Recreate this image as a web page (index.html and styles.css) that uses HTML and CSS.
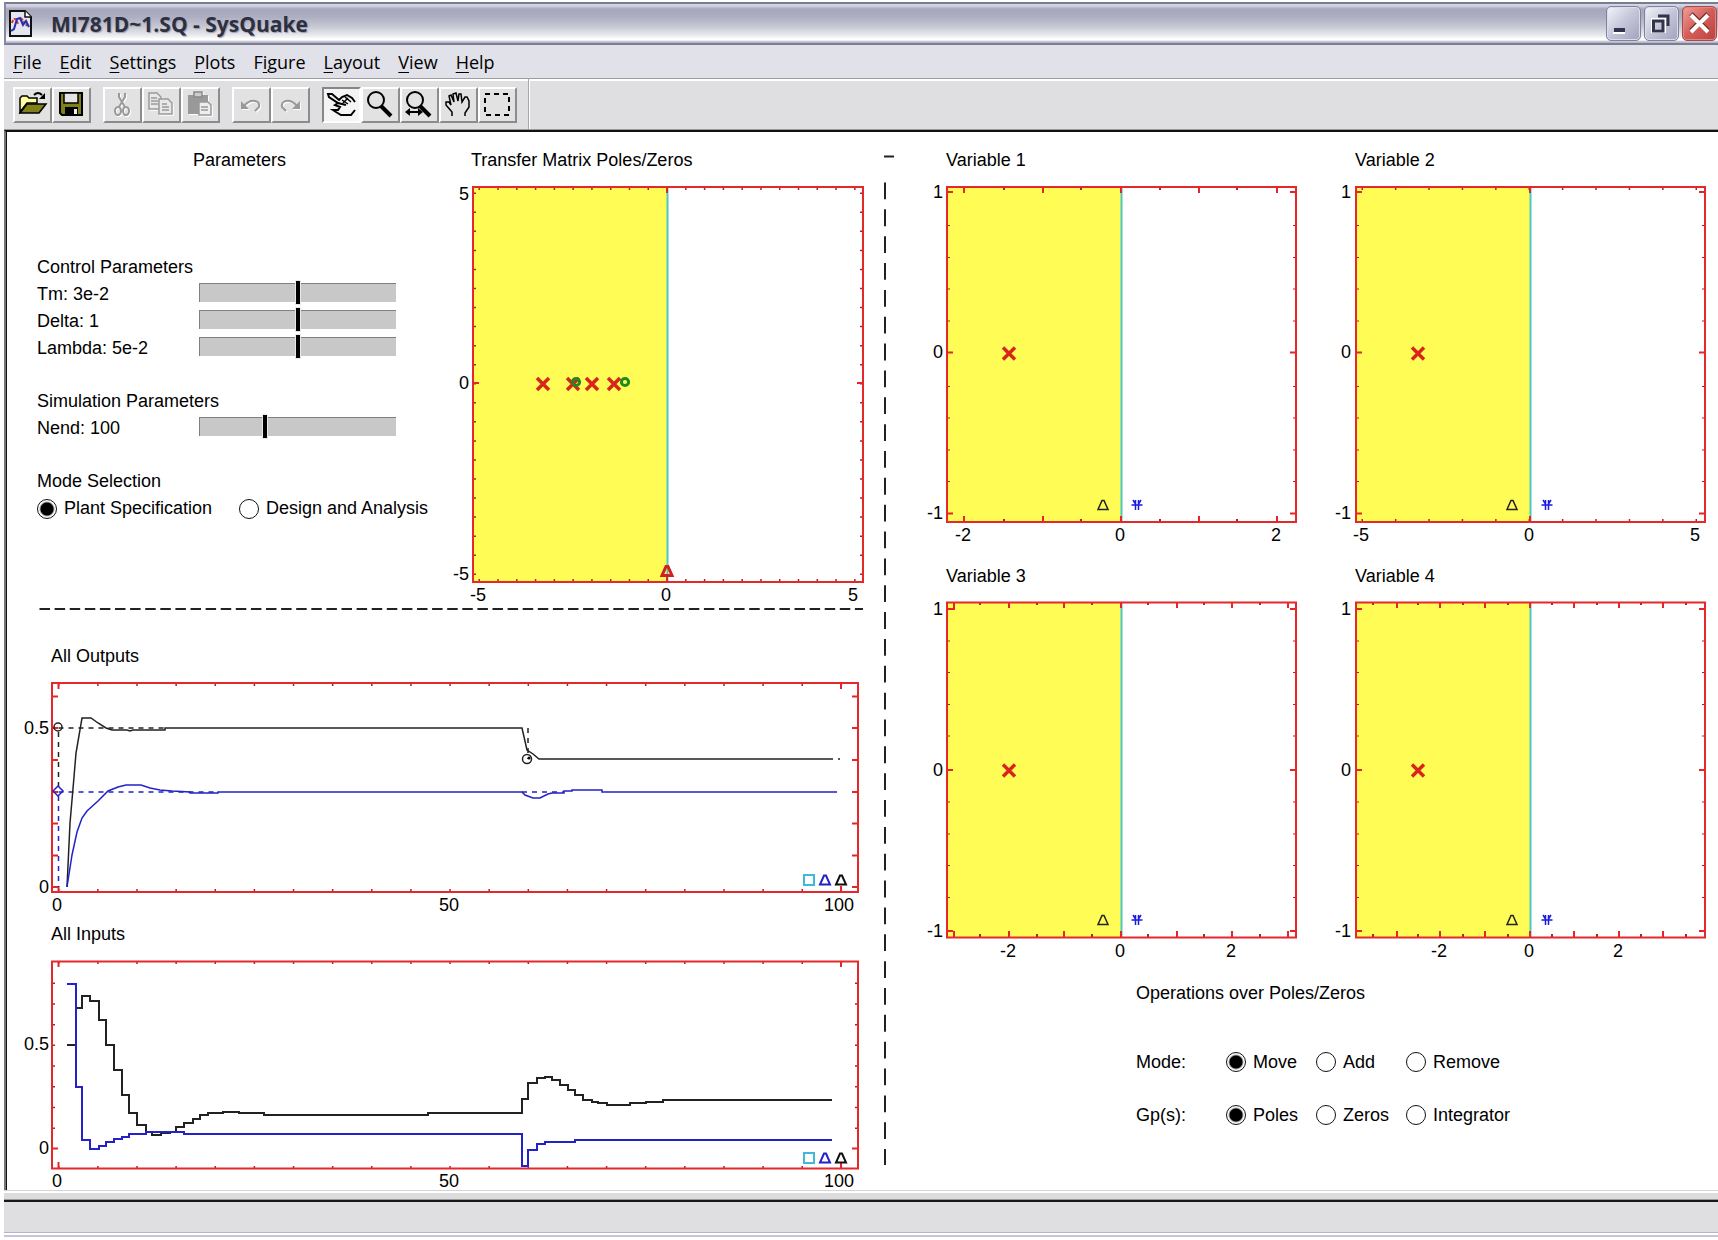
FILE: index.html
```html
<!DOCTYPE html>
<html lang="en">
<head>
<meta charset="utf-8">
<meta name="viewport" content="width=device-width, initial-scale=1">
<title>MI781D~1.SQ - SysQuake</title>
<link rel="stylesheet" href="styles.css">
</head>
<body>
<svg class="defs" aria-hidden="true">
  <defs>
    <path id="pole" class="pole" d="M-6-6 6 6M-6 6 6-6"/>
    <circle id="zero" class="zero" r="3.6"/>
    <path id="tri" d="M-5 4.5H5L1-4.5H-1Z" fill="none"/>
    <path id="star" class="star" d="M-5.500 0H5.500M-1.500-5V5M1.500-5V5M-4-5-1.500-1M4-5 1.500-1"/>
  </defs>
</svg>

<div class="window">
  <header class="titlebar">
    <svg class="app-icon" width="24" height="28" viewBox="0 0 24 28" aria-hidden="true">
      <path d="M1 1H16L22 7V26H1Z" fill="#e4e5f0" stroke="#111" stroke-width="2"/>
      <path d="M16 1V7H22" fill="#fff" stroke="#111" stroke-width="1.500"/>
      <path d="M3 13C5 7 7 8 9 14M12 8 18 16" fill="none" stroke="#e03030" stroke-width="2" stroke-dasharray="3 1"/>
      <path d="M2 21 5 19 8 9 11 8 14 15 17 11 20 17" fill="none" stroke="#2030b0" stroke-width="2"/>
    </svg>
    <h1>MI781D~1.SQ - SysQuake</h1>
    <div class="window-buttons">
      <button type="button" class="win-btn" aria-label="Minimize">
        <svg width="33" height="33" viewBox="0 0 33 33"><path d="M6 25H18V27H6Z" fill="#fff"/><path d="M7 21H18V25H7Z" fill="#33334f"/></svg>
      </button>
      <button type="button" class="win-btn" aria-label="Restore">
        <svg width="33" height="33" viewBox="0 0 33 33" fill="none"><path d="M8 13H19V24H8Z" stroke="#fff" stroke-width="4"/><path d="M13 9H23V19" stroke="#33334a" stroke-width="3"/><path d="M8.500 14H18V24H8.500Z" stroke="#33334a" stroke-width="3"/></svg>
      </button>
      <button type="button" class="win-btn close" aria-label="Close">
        <svg width="33" height="33" viewBox="0 0 33 33" fill="none"><path d="M8 7 25 24M25 7 8 24" stroke="#6e2020" stroke-width="5"/><path d="M8 8 25 25M25 8 8 25" stroke="#fff" stroke-width="4"/></svg>
      </button>
    </div>
  </header>

  <nav class="menubar" aria-label="Main menu">
    <button type="button"><u>F</u>ile</button>
    <button type="button"><u>E</u>dit</button>
    <button type="button"><u>S</u>ettings</button>
    <button type="button"><u>P</u>lots</button>
    <button type="button">F<u>i</u>gure</button>
    <button type="button"><u>L</u>ayout</button>
    <button type="button"><u>V</u>iew</button>
    <button type="button"><u>H</u>elp</button>
  </nav>

  <div class="toolbar" role="toolbar" aria-label="Tools">
    <div class="tool-group">
      <button type="button" aria-label="Open">
        <svg viewBox="0 0 35 32"><path d="M5 23V9L7 7H12L14 9H22V14H12Z" fill="#ffffa0" stroke="#000" stroke-width="1.500"/><path d="M5 24 12 15H31L24 24Z" fill="#808018" stroke="#000" stroke-width="1.500"/><path d="M19 6Q23 2 27 6" fill="none" stroke="#000" stroke-width="2"/><path d="M30 4V10H24Z"/></svg>
      </button>
      <button type="button" aria-label="Save">
        <svg viewBox="0 0 35 32"><path d="M6 4H28V26H8L6 24Z" fill="#808018" stroke="#000" stroke-width="2"/><path d="M10 4H24V14H10Z" fill="#e4e4e4" stroke="#000" stroke-width="1.500"/><path d="M11 18H24V26H11Z"/><path d="M20 20H23V25H20Z" fill="#eee"/></svg>
      </button>
    </div>
    <div class="tool-group">
      <button type="button" disabled aria-label="Cut">
        <svg viewBox="0 0 35 32" fill="none" stroke="#999" stroke-width="2"><path d="M14 4V8L20 18M20 4V8L14 18"/><ellipse cx="13" cy="22" rx="3" ry="4"/><ellipse cx="21" cy="22" rx="3" ry="4"/></svg>
      </button>
      <button type="button" disabled aria-label="Copy">
        <svg viewBox="0 0 35 32" fill="#e8e8e8" stroke="#999" stroke-width="1.500"><path d="M5 4H13L17 8V20H5Z"/><path d="M7 9H13M7 12H14M7 15H14"/><path d="M15 10H24L28 14V25H15Z"/><path d="M18 15H23M18 18H25M18 21H25"/></svg>
      </button>
      <button type="button" disabled aria-label="Paste">
        <svg viewBox="0 0 35 32"><path d="M5 6H25V25H5Z" fill="#999"/><path d="M11 3H19V8H11Z" fill="#ccc" stroke="#888" stroke-width="1.500"/><path d="M16 13H25L28 16V26H16Z" fill="#eee" stroke="#999" stroke-width="1.500"/><path d="M18 18H25M18 21H25" stroke="#999" stroke-width="1.500"/></svg>
      </button>
    </div>
    <div class="tool-group">
      <button type="button" disabled aria-label="Undo">
        <svg viewBox="0 0 35 32"><path d="M10 17Q15 11 21 12Q26 13 25 18L21 22" fill="none" stroke="#999" stroke-width="2"/><path d="M7 12V20H15Z" fill="#999"/></svg>
      </button>
      <button type="button" disabled aria-label="Redo">
        <svg viewBox="0 0 35 32"><path d="M24 17Q19 11 13 12Q8 13 9 18L13 22" fill="none" stroke="#999" stroke-width="2"/><path d="M27 12V20H19Z" fill="#999"/></svg>
      </button>
    </div>
    <div class="tool-group">
      <button type="button" class="pressed" aria-pressed="true" aria-label="Manipulate">
        <svg viewBox="0 0 35 32" fill="none" stroke="#000" stroke-width="2"><path d="M31 21 27 26H17L12 23 9 21H14L16 18 11 16 14 14M31 13 28 9 23 6 18 8 15 11 8 5 4 5 5 8 14 14 22 16"/><path d="M18 11 24 15M21 8 27 13M19 14 24 9" stroke-width="1.500"/></svg>
      </button>
      <button type="button" aria-label="Zoom">
        <svg viewBox="0 0 35 32" fill="none" stroke="#000"><circle cx="13" cy="11" r="8" stroke-width="2"/><path d="M18 17 28 27" stroke-width="4"/></svg>
      </button>
      <button type="button" aria-label="Zoom X">
        <svg viewBox="0 0 35 32" fill="none" stroke="#000"><circle cx="13" cy="11" r="8" stroke-width="2"/><path d="M18 17 28 27" stroke-width="4"/><path d="M6 23H18" stroke-width="2"/><path d="M8 19V27L3 23ZM16 19V27L21 23Z" fill="#000" stroke="none"/></svg>
      </button>
      <button type="button" aria-label="Pan">
        <svg viewBox="0 0 35 32" fill="none" stroke="#000" stroke-width="1.500"><path d="M11 27V23L5 16V13H8L10 16 8 7 10 6 13 13 12 5 15 4 17 12 18 5 20 5 21 13 24 8H26L28 12V18L24 24V27"/></svg>
      </button>
      <button type="button" aria-label="Select">
        <svg viewBox="0 0 35 32"><rect x="5" y="5" width="24" height="21" fill="none" stroke="#000" stroke-width="2" stroke-dasharray="5 4"/></svg>
      </button>
    </div>
  </div>

  <main class="workspace">
    <section class="left">
      <div class="top-row">
        <form class="params">
          <h2>Parameters</h2>
          <div class="param-groups">
            <div class="group">
              <h3>Control Parameters</h3>
              <div class="param"><label for="tm">Tm: 3e-2</label><input id="tm" type="range" min="0" max="100" value="50"></div>
              <div class="param"><label for="delta">Delta: 1</label><input id="delta" type="range" min="0" max="100" value="50"></div>
              <div class="param"><label for="lambda">Lambda: 5e-2</label><input id="lambda" type="range" min="0" max="100" value="50"></div>
            </div>
            <div class="group">
              <h3>Simulation Parameters</h3>
              <div class="param"><label for="nend">Nend: 100</label><input id="nend" type="range" min="0" max="100" value="33"></div>
            </div>
            <div class="group" role="radiogroup" aria-labelledby="mode-title">
              <h3 id="mode-title">Mode Selection</h3>
              <div class="modes">
                <label class="radio"><input type="radio" name="mode" checked>Plant Specification</label>
                <label class="radio"><input type="radio" name="mode">Design and Analysis</label>
              </div>
            </div>
          </div>
        </form>

        <figure class="transfer">
          <figcaption>Transfer Matrix Poles/Zeros</figcaption>
          <svg class="plot" viewBox="440 172 440 433" role="img" aria-label="Transfer matrix poles and zeros">
            <rect class="stable" x="473" y="187" width="194" height="395"/>
            <path class="axis" d="M667.500 187V582"/>
            <path class="minor-x" stroke-dasharray="1.5 17.28" d="M478.500 189H862M478.500 580H862"/>
            <path class="minor-x" stroke-dasharray="1.5 17.55" d="M475 192.500V581M861 192.500V581"/>
            <path class="major" d="M473 383h6M863 383h-6M667 187v6M667 582v-6"/>
            <rect class="frame" x="473" y="187" width="390" height="395"/>
            <use href="#pole" x="543" y="384"/><use href="#pole" x="573" y="384"/><use href="#pole" x="592" y="384"/><use href="#pole" x="614" y="384"/>
            <use href="#zero" x="576" y="382"/><use href="#zero" x="625" y="382"/>
            <use href="#tri" x="667" y="571" stroke="#d02020" stroke-width="3"/>
            <g class="y-label"><text x="469" y="200">5</text><text x="469" y="389">0</text><text x="469" y="580">-5</text></g>
            <g class="x-label"><text x="478" y="601">-5</text><text x="666" y="601">0</text><text x="853" y="601">5</text></g>
          </svg>
        </figure>
      </div>

      <svg class="plot" viewBox="7 605 873 8" aria-hidden="true"><path class="dash" stroke-dasharray="10.5 4.6" d="M39.500 609H863"/></svg>

      <figure class="series outputs">
        <figcaption>All Outputs</figcaption>
        <svg class="plot" viewBox="7 668 873 247" role="img" aria-label="All outputs">
          <path class="minor-x" stroke-dasharray="1.5 37.63" d="M58 685H857M58 890H857"/>
          <path class="major" d="M52 696.500h6M52 728h6M52 760h6M52 792h6M52 823.500h6M52 855.500h6M52 887h6M858 696.500h-6M858 728h-6M858 760h-6M858 792h-6M858 823.500h-6M858 855.500h-6M858 887h-6M58.500 683v6M58.500 892v-6M841 683v6M841 892v-6"/>
          <rect class="frame" x="52" y="683" width="806" height="209"/>
          <path class="black" stroke-dasharray="5 5" d="M58.500 728H165M528 728V759M58.500 732V787"/>
          <path class="blue" stroke-dasharray="5 5" d="M58.500 792H218M522 792H564M58.500 796V887"/>
          <path class="black" d="M67 887 70 823 74 777 76 753 82 718H91L98 723 106 728 112 730H127L130 731 133 730H165V728H522L527 750 533 754 539 759H833M838 759H840"/>
          <path class="blue" d="M67 887 72 855 77 832 82 818 87 811 98 801 108 791 118 787 126 785H141L150 788 160 790 172 791 190 792V793H218V792H522L525 795 533 798H540L548 794 552 793H564V791H572V790H602V792H837"/>
          <circle class="black" cx="58" cy="727" r="4"/><circle class="black" cx="527" cy="759" r="4.500"/><circle cx="529" cy="758" r="1.500"/>
          <path class="blue" d="M58 786 63 791 58 796 53 791Z"/>
          <rect class="cyan" x="804" y="875" width="10" height="10"/>
          <use href="#tri" x="825" y="880" stroke="#2222c8" stroke-width="2"/><use href="#tri" x="841" y="880" stroke="#111" stroke-width="2"/>
          <g class="y-label"><text x="49" y="734">0.5</text><text x="49" y="893">0</text></g>
          <g class="x-label"><text x="57" y="911">0</text><text x="449" y="911">50</text><text x="839" y="911">100</text></g>
        </svg>
      </figure>

      <figure class="series inputs">
        <figcaption>All Inputs</figcaption>
        <svg class="plot" viewBox="7 946 873 244" role="img" aria-label="All inputs">
          <path class="minor-x" stroke-dasharray="1.5 37.63" d="M58 963H857M58 1167H857"/>
          <path class="minor-x" stroke-dasharray="1.5 19.2" d="M54 982.500V1147M856 982.500V1147"/>
          <path class="major" d="M52 1148.500h6M858 1148.500h-6M58.500 961v6M58.500 1168v-6M841 961v6M841 1168v-6"/>
          <rect class="frame" x="52" y="961.500" width="806" height="207"/>
          <path class="black" d="M67 1045H76M76 1008H82V996H90V1001H99V1020H106V1045H114V1070H122V1095H129V1113H137V1125H146V1132H152V1135H161V1133H170V1132H176V1127H184V1123H193V1119H200V1115H208V1113H223V1112H239V1113H264V1115H428V1113H522V1099H528V1083H537V1078H545V1077H552V1080H560V1085H568V1090H575V1095H583V1100H592V1102H598V1103H607V1105H630V1103H646V1102H663V1100H832"/>
          <path class="blue" d="M67 984H76V1087H82V1140H90V1149H99V1146H106V1142H114V1139H122V1137H129V1134H146V1132H184V1134H522V1166H528V1150H537V1144H545V1142H575V1140H832"/>
          <rect class="cyan" x="804" y="1153" width="10" height="10"/>
          <use href="#tri" x="825" y="1158" stroke="#2222c8" stroke-width="2"/><use href="#tri" x="841" y="1158" stroke="#111" stroke-width="2"/>
          <g class="y-label"><text x="49" y="1050">0.5</text><text x="49" y="1154">0</text></g>
          <g class="x-label"><text x="57" y="1187">0</text><text x="449" y="1187">50</text><text x="839" y="1187">100</text></g>
        </svg>
      </figure>
    </section>

    <svg class="divider" viewBox="880 133 15 1057" aria-hidden="true"><path class="dash" d="M884 156.500H894"/><path class="dash" stroke-dasharray="16.8 10.05" d="M885 182.500V1165"/></svg>

    <section class="right">
      <div class="variables">
        <figure>
          <figcaption>Variable 1</figcaption>
          <svg class="plot" viewBox="895 172 409 378" role="img" aria-label="Variable 1">
            <rect class="stable" x="947" y="187" width="174" height="335"/>
            <path class="axis" d="M1121.500 187V522"/>
            <path class="minor-x" d="M1004 187v3M1081 187v3M1160 187v3M1237 187v3M1004 522v-3M1081 522v-3M1160 522v-3M1237 522v-3"/>
            <path class="minor-y" d="M947 225.500h3M947 257.500h3M947 289h3M947 321h3M947 386.500h3M947 418h3M947 450h3M947 481.500h3M1296 225.500h-3M1296 257.500h-3M1296 289h-3M1296 321h-3M1296 386.500h-3M1296 418h-3M1296 450h-3M1296 481.500h-3"/>
            <path class="major" d="M964 187v6M1043 187v6M1121 187v6M1199 187v6M1277 187v6M964 522v-6M1043 522v-6M1121 522v-6M1199 522v-6M1277 522v-6M947 192h6M947 352.500h6M947 513.500h6M1296 192h-6M1296 352.500h-6M1296 513.500h-6"/>
            <rect class="frame" x="947" y="187" width="349" height="335"/>
            <use href="#pole" x="1009" y="353.500"/><use href="#tri" x="1103" y="505" stroke="#222" stroke-width="1.500"/><use href="#star" x="1137" y="505"/>
            <g class="y-label"><text x="943" y="198">1</text><text x="943" y="358">0</text><text x="943" y="519">-1</text></g>
            <g class="x-label"><text x="963" y="541">-2</text><text x="1120" y="541">0</text><text x="1276" y="541">2</text></g>
          </svg>
        </figure>
        <figure>
          <figcaption>Variable 2</figcaption>
          <svg class="plot" viewBox="1304 172 414 378" role="img" aria-label="Variable 2">
            <rect class="stable" x="1356" y="187" width="174" height="335"/>
            <path class="axis" d="M1530.500 187V522"/>
            <path class="minor-x" stroke-dasharray="1.5 31.9" d="M1361.500 189H1704M1361.500 520H1704"/>
            <path class="minor-y" d="M1356 225.500h3M1356 257.500h3M1356 289h3M1356 321h3M1356 386.500h3M1356 418h3M1356 450h3M1356 481.500h3M1705 225.500h-3M1705 257.500h-3M1705 289h-3M1705 321h-3M1705 386.500h-3M1705 418h-3M1705 450h-3M1705 481.500h-3"/>
            <path class="major" d="M1530 187v6M1530 522v-6M1356 192h6M1356 352.500h6M1356 513.500h6M1705 192h-6M1705 352.500h-6M1705 513.500h-6"/>
            <rect class="frame" x="1356" y="187" width="349" height="335"/>
            <use href="#pole" x="1418" y="353.500"/><use href="#tri" x="1512" y="505" stroke="#222" stroke-width="1.500"/><use href="#star" x="1547" y="505"/>
            <g class="y-label"><text x="1351" y="198">1</text><text x="1351" y="358">0</text><text x="1351" y="519">-1</text></g>
            <g class="x-label"><text x="1361" y="541">-5</text><text x="1529" y="541">0</text><text x="1695" y="541">5</text></g>
          </svg>
        </figure>
        <figure>
          <figcaption>Variable 3</figcaption>
          <svg class="plot" viewBox="895 588 409 378" role="img" aria-label="Variable 3">
            <rect class="stable" x="947" y="602.500" width="174" height="335"/>
            <path class="axis" d="M1121.500 602V937"/>
            <path class="minor-x" d="M980 602v3M1037 602v3M1092 602v3M1148 602v3M1204 602v3M1260 602v3M980 937v-3M1037 937v-3M1092 937v-3M1148 937v-3M1204 937v-3M1260 937v-3"/>
            <path class="minor-y" d="M947 641h3M947 672.500h3M947 704.500h3M947 736h3M947 802h3M947 834h3M947 865.500h3M947 897.500h3M1296 641h-3M1296 672.500h-3M1296 704.500h-3M1296 736h-3M1296 802h-3M1296 834h-3M1296 865.500h-3M1296 897.500h-3"/>
            <path class="major" d="M954 602v8M1009 602v6M1064 602v6M1121 602v6M1177 602v6M1232 602v6M1288 602v6M954 937v-6M1009 937v-6M1064 937v-6M1121 937v-6M1177 937v-6M1232 937v-6M1288 937v-6M947 609h6M947 770h6M947 931h6M1296 609h-6M1296 770h-6M1296 931h-6"/>
            <rect class="frame" x="947" y="602.500" width="349" height="335"/>
            <use href="#pole" x="1009" y="770.500"/><use href="#tri" x="1103" y="920" stroke="#222" stroke-width="1.500"/><use href="#star" x="1137" y="920"/>
            <g class="y-label"><text x="943" y="615">1</text><text x="943" y="776">0</text><text x="943" y="937">-1</text></g>
            <g class="x-label"><text x="1008" y="957">-2</text><text x="1120" y="957">0</text><text x="1231" y="957">2</text></g>
          </svg>
        </figure>
        <figure>
          <figcaption>Variable 4</figcaption>
          <svg class="plot" viewBox="1304 588 414 378" role="img" aria-label="Variable 4">
            <rect class="stable" x="1356" y="602.500" width="174" height="335"/>
            <path class="axis" d="M1530.500 602V937"/>
            <path class="minor-x" d="M1373 602v3M1418 602v3M1463 602v3M1508 602v3M1552 602v3M1597 602v3M1641 602v3M1686 602v3M1373 937v-3M1418 937v-3M1463 937v-3M1508 937v-3M1552 937v-3M1597 937v-3M1641 937v-3M1686 937v-3"/>
            <path class="minor-y" d="M1356 641h3M1356 672.500h3M1356 704.500h3M1356 736h3M1356 802h3M1356 834h3M1356 865.500h3M1356 897.500h3M1705 641h-3M1705 672.500h-3M1705 704.500h-3M1705 736h-3M1705 802h-3M1705 834h-3M1705 865.500h-3M1705 897.500h-3"/>
            <path class="major" d="M1397 602v6M1440 602v6M1485 602v6M1530 602v6M1574 602v6M1619 602v6M1663 602v6M1397 937v-6M1440 937v-6M1485 937v-6M1530 937v-6M1574 937v-6M1619 937v-6M1663 937v-6M1356 609h6M1356 770h6M1356 931h6M1705 609h-6M1705 770h-6M1705 931h-6"/>
            <rect class="frame" x="1356" y="602.500" width="349" height="335"/>
            <use href="#pole" x="1418" y="770.500"/><use href="#tri" x="1512" y="920" stroke="#222" stroke-width="1.500"/><use href="#star" x="1547" y="920"/>
            <g class="y-label"><text x="1351" y="615">1</text><text x="1351" y="776">0</text><text x="1351" y="937">-1</text></g>
            <g class="x-label"><text x="1439" y="957">-2</text><text x="1529" y="957">0</text><text x="1618" y="957">2</text></g>
          </svg>
        </figure>
      </div>

      <form class="operations">
        <h2>Operations over Poles/Zeros</h2>
        <div class="op-row" role="radiogroup" aria-labelledby="op-mode">
          <span id="op-mode">Mode:</span>
          <label class="radio"><input type="radio" name="op" checked>Move</label>
          <label class="radio"><input type="radio" name="op">Add</label>
          <label class="radio"><input type="radio" name="op">Remove</label>
        </div>
        <div class="op-row" role="radiogroup" aria-labelledby="op-gp">
          <span id="op-gp">Gp(s):</span>
          <label class="radio"><input type="radio" name="gp" checked>Poles</label>
          <label class="radio"><input type="radio" name="gp">Zeros</label>
          <label class="radio"><input type="radio" name="gp">Integrator</label>
        </div>
      </form>
    </section>
  </main>

  <footer class="statusbar"></footer>
</div>
</body>
</html>
```

FILE: styles.css
```css
* { box-sizing: border-box; }

body {
  margin: 0;
  background: #fff;
  color: #000;
  font: 18px/24px "Liberation Sans", Arial, sans-serif;
}

h1, h2, h3, figure { margin: 0; font: inherit; }
button { margin: 0; font: inherit; color: inherit; }
.defs { position: absolute; width: 0; height: 0; }

.window {
  display: flex;
  flex-direction: column;
  min-height: 100vh;
  padding: 2px 0 3px 4px;
}

/* Title bar */
.titlebar {
  display: flex;
  align-items: center;
  height: 43px;
  padding: 0 1px 0 3px;
  border-top: 2px solid #7b7c90;
  border-bottom: 2px solid #7c7d92;
  border-left: 2px solid #8889a2;
  background: linear-gradient(#d6d7e6 0, #d0d1e2 2px, #a6a7be 5px, #adaec2 13px, #c6c6d2 22px, #e8e8ee 31px, #fff 35px, #fff 36px, #b6b7c8 38px);
}
.app-icon { flex: none; }
.titlebar h1 {
  flex: 1;
  padding-left: 18px;
  color: #2c3040;
  font: bold 21px/36px "Open Sans", "Noto Sans", sans-serif;
  text-shadow: 1px 1px 1px #9a9bb0;
}
.window-buttons { display: flex; gap: 3px; }
.win-btn {
  display: block;
  width: 35px;
  height: 35px;
  padding: 0;
  border: 1px solid #80819c;
  border-radius: 5px;
  background: linear-gradient(135deg, #f4f4fa, #c4c5d8 50%, #a2a3bc);
  box-shadow: inset 0 0 0 1px #dcdcea;
}
.win-btn.close {
  border-color: #a84848;
  background: linear-gradient(135deg, #eca098, #d45c58 50%, #b84444);
  box-shadow: inset 0 0 0 1px #e08880;
}
.win-btn svg { display: block; }

/* Menu bar */
.menubar {
  display: flex;
  height: 33px;
  background: #e0e1e9;
}
.menubar button {
  padding: 0 9px;
  border: 0;
  background: none;
  font: 18px/30px "Open Sans", "Noto Sans", sans-serif;
}
.menubar u { text-underline-offset: 3px; text-decoration-thickness: 1px; }

/* Tool bar */
.toolbar {
  display: flex;
  border-top: 1px solid #9c9c9e;
  box-shadow: inset 0 2px #fff;
  background: #dfdfe1;
  padding-left: 9px;
}
.tool-group { display: flex; padding: 8px 12px 6px 0; }
.tool-group:last-child { padding-right: 11px; border-right: 1px solid #a8a8aa; box-shadow: 1px 0 #fff; }
.toolbar button {
  width: 39px;
  height: 36px;
  padding: 0;
  border: 2px solid;
  border-color: #fff #8c8c8c #8c8c8c #fff;
  background: #e3e2e3;
}
.toolbar button.pressed { border-color: #868686 #fff #fff #868686; background: #f4f4f4; }
.toolbar svg { display: block; width: 100%; height: 100%; }
.toolbar button:disabled svg { filter: drop-shadow(1px 1px 0 #fff); }

/* Work area */
.workspace {
  display: grid;
  grid-template-columns: minmax(0, 873fr) 15px minmax(0, 823fr);
  align-items: start;
  flex: 1;
  border-top: 2px solid #111;
  border-left: 2px solid #777;
  box-shadow: inset 1px 0 #111, 0 -1px #999;
  padding: 1px 0 0 1px;
  margin-top: 1px;
}
.plot, .divider { display: block; width: 100%; height: auto; overflow: visible; }
.left, .right { padding-top: 15px; }
.top-row { display: grid; grid-template-columns: minmax(0, 433fr) minmax(0, 440fr); }
.transfer figcaption { padding-left: 31px; }
.series figcaption { padding-left: 44px; }
.outputs { margin-top: 31px; }
.inputs { margin-top: 7px; }

/* Parameter panel */
.params h2 { padding-left: 186px; }
.param-groups {
  display: flex;
  flex-direction: column;
  gap: 26px;
  padding: 82px 0 0 30px;
  line-height: 27px;
}
.param { display: grid; grid-template-columns: 162px minmax(0, 197px); align-items: start; height: 27px; }
.modes { display: grid; grid-template-columns: 202px auto; white-space: nowrap; }

input[type="range"] {
  appearance: none;
  width: 100%;
  height: 23px;
  margin: 0;
  background: none;
}
input[type="range"]::-webkit-slider-runnable-track {
  height: 19px;
  border-top: 1px solid #808080;
  border-left: 1px solid #808080;
  background: #c8c8c8;
}
input[type="range"]::-webkit-slider-thumb {
  appearance: none;
  width: 4px;
  height: 23px;
  margin-top: -3px;
  background: #000;
  box-shadow: 0 0 0 1px #e8e8e8;
}

.radio { display: flex; align-items: center; gap: 7px; }
input[type="radio"] {
  appearance: none;
  flex: none;
  width: 20px;
  height: 20px;
  margin: 0;
  border: 1px solid #111;
  border-radius: 50%;
  background: #fff;
}
input[type="radio"]:checked { background: radial-gradient(circle, #000 6px, #aaa 7px, #fff 8px); }

/* Variable plots */
.variables {
  display: grid;
  grid-template-columns: minmax(0, 409fr) minmax(0, 414fr);
  row-gap: 14px;
}
.variables figcaption { padding-left: 51px; }

.operations { padding: 15px 0 0 241px; }
.operations h2 { margin-bottom: 45px; }
.op-row { display: grid; grid-template-columns: 90px 90px 90px auto; margin-bottom: 29px; }

/* Plot parts */
.plot text { font-size: 18px; fill: #000; }
.y-label { text-anchor: end; }
.x-label { text-anchor: middle; }
.stable { fill: #fffd55; }
.axis { stroke: #4cc8c4; stroke-width: 2; }
.frame { fill: none; stroke: #e4282c; stroke-width: 2; }
.major { stroke: #e02828; stroke-width: 2; }
.minor-x { stroke: #b82020; stroke-width: 2; }
.minor-y { stroke: #b82020; stroke-width: 1; }
.black, .blue, .cyan { fill: none; stroke-width: 2; }
.outputs .black, .outputs .blue { stroke-width: 1.5; }
.black { stroke: #222; }
.blue { stroke: #2222c8; }
.cyan { stroke: #40b8d8; }
.dash { stroke: #222; stroke-width: 2; }
.pole { stroke: #d8241c; stroke-width: 3.5; }
.zero { fill: none; stroke: #208a20; stroke-width: 3; }
.star { fill: none; stroke: #1a1ae0; stroke-width: 1.5; }

/* Status bar */
.statusbar {
  height: 48px;
  background: linear-gradient(#d4d4d4 0 1px, #fff 1px 3px, #dcdcdc 3px 9px, #999 9px 10px, #181818 10px 12px, #dfdfe2 12px 42px, #b4b4c4 42px 43px, #fff 43px 45px, #c4c4dc 45px 47px, #fff 47px);
}
```
